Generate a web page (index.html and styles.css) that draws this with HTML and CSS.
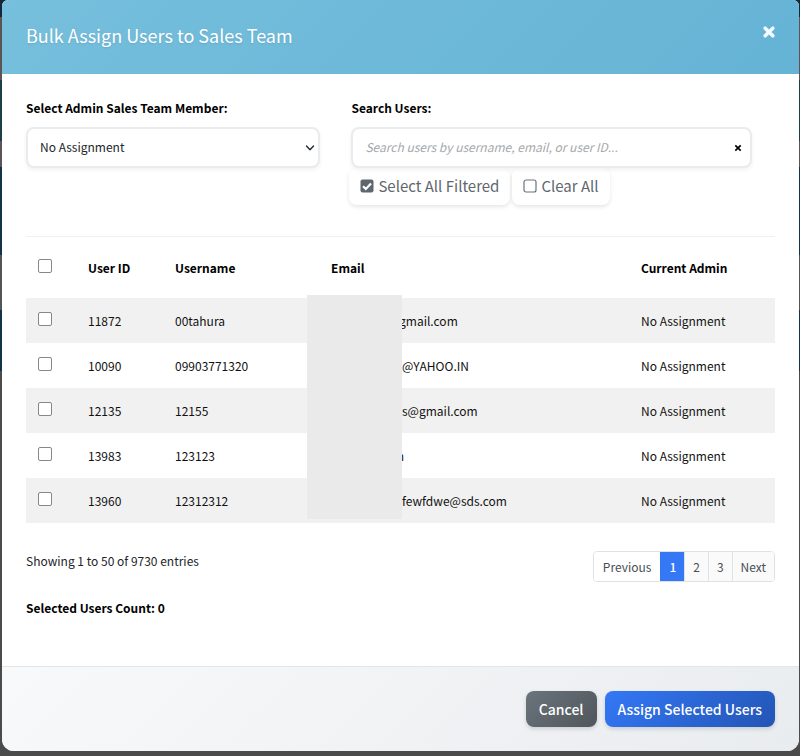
FILE: index.html
```html
<!DOCTYPE html>
<html lang="en">
<head>
<meta charset="utf-8">
<meta name="viewport" content="width=device-width, initial-scale=1">
<title>Bulk Assign Users to Sales Team</title>
<link rel="stylesheet" href="styles.css">
</head>
<body>
<main class="modal" role="dialog" aria-labelledby="modal-title">
  <header class="modal-header">
    <h1 class="modal-title" id="modal-title">Bulk Assign Users to Sales Team</h1>
    <button class="close" type="button" aria-label="Close">
      <svg viewBox="0 0 12 12" width="12" height="12" aria-hidden="true"><path d="M2.2 2.2 9.8 9.8M9.8 2.2 2.2 9.8" fill="none" stroke="currentColor" stroke-width="3.5" stroke-linecap="round"/></svg>
    </button>
  </header>

  <div class="modal-body">
    <form class="filters">
      <div class="field">
        <label class="label" for="member">Select Admin Sales Team Member:</label>
        <div class="control">
          <select class="input" id="member"><option>No Assignment</option></select>
          <svg class="chevron" viewBox="0 0 10 8" width="10" height="8" aria-hidden="true"><path d="M1.5 2 5 5.8 8.500 2" fill="none" stroke="currentColor" stroke-width="1.3" stroke-linecap="round" stroke-linejoin="round"/></svg>
        </div>
      </div>
      <div class="field">
        <label class="label" for="search">Search Users:</label>
        <div class="control">
          <input class="input" id="search" type="text" placeholder="Search users by username, email, or user ID...">
          <button class="clear" type="button" aria-label="Clear search">
            <svg viewBox="0 0 8 8" width="8" height="8" aria-hidden="true"><path d="M1.300 1.300 6.700 6.700M6.700 1.300 1.300 6.700" fill="none" stroke="currentColor" stroke-width="1.700"/></svg>
          </button>
        </div>
        <div class="bulk">
          <button class="bulk-button" type="button">
            <svg viewBox="0 0 14 14" width="14" height="14" aria-hidden="true"><rect x="0.500" y="0.500" width="13" height="13" rx="2" fill="#5f676e"/><path d="M3 7.200 5.800 9.900 11 4.400" fill="none" stroke="#fff" stroke-width="2.200"/></svg>
            Select All Filtered
          </button>
          <button class="bulk-button" type="button">
            <svg viewBox="0 0 14 14" width="14" height="14" aria-hidden="true"><rect x="1" y="1" width="12" height="12" rx="2" fill="none" stroke="#6a7279" stroke-width="1.200"/></svg>
            Clear All
          </button>
        </div>
      </div>
    </form>

    <div class="table-wrap">
      <table class="users">
        <colgroup><col class="col-check"><col class="col-id"><col class="col-name"><col><col class="col-admin"></colgroup>
        <thead>
          <tr><th><input class="check" type="checkbox" aria-label="Select all users"></th><th>User ID</th><th>Username</th><th>Email</th><th>Current Admin</th></tr>
        </thead>
        <tbody>
          <tr><td><input class="check" type="checkbox" aria-label="Select user 11872"></td><td>11872</td><td>00tahura</td><td><span class="hidden-part hidden-part-medium"></span>gmail.com</td><td>No Assignment</td></tr>
          <tr><td><input class="check" type="checkbox" aria-label="Select user 10090"></td><td>10090</td><td>09903771320</td><td><span class="hidden-part"></span>@YAHOO.IN</td><td>No Assignment</td></tr>
          <tr><td><input class="check" type="checkbox" aria-label="Select user 12135"></td><td>12135</td><td>12155</td><td><span class="hidden-part"></span>s@gmail.com</td><td>No Assignment</td></tr>
          <tr><td><input class="check" type="checkbox" aria-label="Select user 13983"></td><td>13983</td><td>123123</td><td><span class="hidden-part hidden-part-short"></span>m</td><td>No Assignment</td></tr>
          <tr><td><input class="check" type="checkbox" aria-label="Select user 13960"></td><td>13960</td><td>12312312</td><td><span class="hidden-part"></span>fewfdwe@sds.com</td><td>No Assignment</td></tr>
        </tbody>
      </table>
      <div class="privacy-cover"></div>
    </div>

    <div class="table-footer">
      <p class="info">Showing 1 to 50 of 9730 entries</p>
      <nav class="pagination" aria-label="Pages">
        <a class="page page-disabled" href="#">Previous</a>
        <a class="page page-active" href="#" aria-current="page">1</a>
        <a class="page" href="#">2</a>
        <a class="page" href="#">3</a>
        <a class="page" href="#">Next</a>
      </nav>
    </div>
    <p class="count">Selected Users Count: 0</p>
  </div>

  <footer class="modal-footer">
    <button class="button button-cancel" type="button">Cancel</button>
    <button class="button button-assign" type="button">Assign Selected Users</button>
  </footer>
</main>
</body>
</html>
```
FILE: styles.css
```css
* {
  box-sizing: border-box;
}

body {
  margin: 0;
  min-height: 100vh;
  padding: 0 1px 5px 2px;
  display: flex;
  background: linear-gradient(#14283a 0 17px, #5d5355 17px 80px, #1d3f48 80px 141px, #5d5355 141px 167px, #12334a 167px 255px, #555 255px 310px, #12334a 310px 371px, #4b4b4b 371px);
  color: #212529;
  font: 12px/18px "Noto Sans CJK SC", "Noto Sans", sans-serif;
}

button,
input,
select {
  margin: 0;
  font: inherit;
  color: inherit;
}

.modal {
  flex: 1;
  display: flex;
  flex-direction: column;
  overflow: hidden;
  border-radius: 6px 6px 12px 12px;
  background: #fff;
}

.modal-header {
  display: flex;
  justify-content: space-between;
  align-items: center;
  height: 74px;
  padding: 0 24px 5px;
  background: linear-gradient(135deg, #76bfdd, #65b3d5);
  color: #fff;
}

.modal-title {
  margin: 0;
  font-size: 18px;
  line-height: 24px;
  font-weight: 400;
  text-shadow: 0 1px 2px rgba(0, 0, 0, 0.1);
}

.close {
  display: flex;
  padding: 0 0 5px;
  border: 0;
  background: none;
  color: #f4fbff;
}

.modal-body {
  flex: 1;
  padding: 25px 24px 0;
}

.filters {
  display: grid;
  grid-template-columns: 294fr 400fr;
  gap: 31px;
  padding: 0 23px 31px 0;
}

.label {
  display: block;
  margin-bottom: 10px;
  color: #000;
  font-weight: 700;
}

.control {
  position: relative;
}

.input {
  display: block;
  width: 100%;
  height: 41px;
  padding: 0 12px 2px;
  border: 2px solid #e9ecef;
  border-radius: 8px;
  background: #fff;
  box-shadow: 0 2px 4px rgba(0, 0, 0, 0.06);
  appearance: none;
}

.input::placeholder {
  color: #a4a8ac;
  font-style: italic;
  opacity: 1;
}

.chevron {
  position: absolute;
  top: 17px;
  right: 5px;
}

.clear {
  position: absolute;
  top: 12px;
  right: 5px;
  display: flex;
  padding: 5px;
  border: 0;
  background: none;
  color: #000;
}

.bulk {
  display: flex;
  gap: 2px;
  margin: 0 0 0 -2px;
}

.bulk-button {
  display: flex;
  align-items: center;
  gap: 4px;
  height: 37px;
  padding: 0 11px 1px;
  border: 0;
  border-radius: 8px;
  background: #fff;
  box-shadow: 0 2px 4px rgba(0, 0, 0, 0.1);
  color: #5f676e;
  font-size: 15px;
  line-height: 20px;
  white-space: nowrap;
}

.table-wrap {
  position: relative;
  border-top: 1px solid #f0f1f2;
}

.users {
  width: 100%;
  table-layout: fixed;
  border-collapse: collapse;
  color: #111;
}

.col-check {
  width: 50px;
}

.col-id {
  width: 87px;
}

.col-name {
  width: 156px;
}

.col-admin {
  width: 146px;
}

.users th,
.users td {
  height: 45px;
  padding: 0 12px;
  text-align: left;
}

.users th {
  height: 61px;
  color: #000;
  font-weight: 700;
}

.users tbody tr:nth-child(odd) {
  background: #f1f1f1;
}

.check {
  display: block;
  width: 14px;
  height: 14px;
  margin-bottom: 3px;
  appearance: none;
  border: 1px solid #85888b;
  border-radius: 2px;
  background: #fff;
}

.hidden-part {
  display: inline-block;
  width: 71px;
}

.hidden-part-medium {
  width: 68px;
}

.hidden-part-short {
  width: 62px;
}

.privacy-cover {
  position: absolute;
  top: 58px;
  left: 281px;
  width: 95px;
  height: 224px;
  background: #eaeaea;
}

.table-footer {
  display: flex;
  justify-content: space-between;
  padding-top: 28px;
}

.info {
  margin: 0;
  line-height: 20px;
}

.pagination {
  display: flex;
  overflow: hidden;
  border: 1px solid #dee2e6;
  border-radius: 4px;
}

.page {
  padding: 5px 8px;
  border-left: 1px solid #dee2e6;
  background: #fafafa;
  color: #4a4f54;
  text-decoration: none;
  line-height: 19px;
}

.page-disabled {
  padding: 5px 9px;
  border-left: 0;
  background: #fff;
}

.page-active {
  border-color: #3578f6;
  background: #3578f6;
  color: #fff;
  font-weight: 500;
}

.count {
  margin: 17px 0 0;
  color: #000;
  font-weight: 700;
}

.modal-footer {
  display: flex;
  justify-content: flex-end;
  gap: 8px;
  padding: 24px;
  border-top: 1px solid #e3e5e7;
  background: linear-gradient(135deg, #f8f9fa, #e9ecef);
}

.button {
  height: 36px;
  padding: 0 13px 1px;
  border: 0;
  border-radius: 8px;
  box-shadow: 0 2px 4px rgba(0, 0, 0, 0.14);
  color: #fff;
  font-size: 14px;
  font-weight: 500;
}

.button-cancel {
  background: linear-gradient(135deg, #6b747c, #50565b);
}

.button-assign {
  background: linear-gradient(135deg, #3478f6, #2355b5);
}
```
